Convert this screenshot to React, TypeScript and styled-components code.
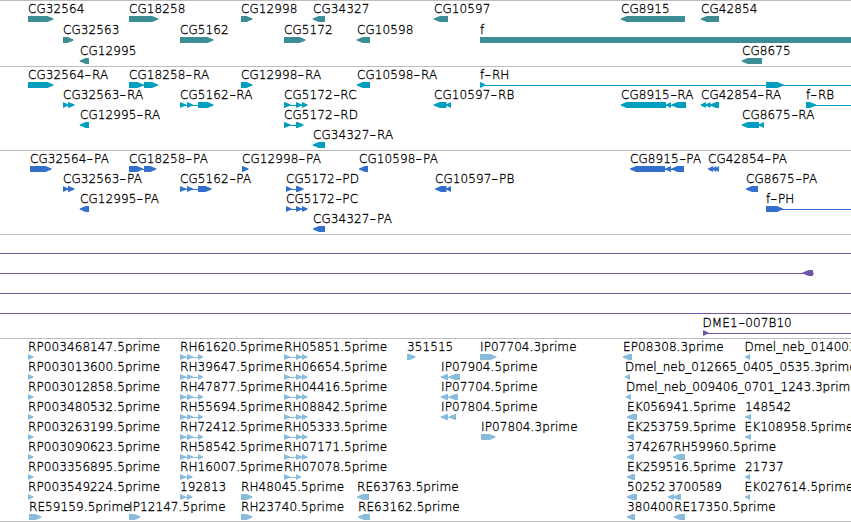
import React from "react";
import styled, { createGlobalStyle } from "styled-components";

const GlobalStyle = createGlobalStyle`
  body { margin: 0; background: #fff; overflow: hidden; }
`;

const Browser = styled.main`
  display: flex;
  flex-direction: column;
  width: 851px;
  height: 522px;
  overflow: hidden;
  background: #fff;
  color: #000;
  font: 200 12px/14px "DejaVu Sans", sans-serif;
`;

const Track = styled.section<{ $color: string; $end: number }>`
  flex: none;
  border-top: 1px solid #bdbdbd;
  padding: 1px 0 ${(p) => p.$end}px;
  color: ${(p) => p.$color};
`;

const Closing = styled.div`
  flex: none;
  height: 1px;
  background: #bdbdbd;
`;

const Lane = styled.div<{ $height: number }>`
  position: relative;
  height: ${(p) => p.$height}px;
`;

/* Features sit at their genomic coordinate within a lane. */
const Label = styled.span<{ $x: number; $tight: boolean }>`
  position: absolute;
  top: 0;
  left: ${(p) => p.$x}px;
  color: #000;
  white-space: pre;
  letter-spacing: ${(p) => (p.$tight ? 0 : 0.09)}px;
  -webkit-text-stroke: 0.3px #000;
`;

const Dash = styled.span`
  display: inline-block;
  width: 7.6px;
  text-align: center;
  letter-spacing: 0;
  transform: scaleX(1.5);
`;

const Glyphs = styled.svg`
  position: absolute;
  left: 0;
  top: 14px;
  display: block;
`;

type Span = [number, number];
type Feature = { x: number; name?: string; dir: 1 | -1; spans: Span[]; line?: Span };

const f = (name: string, x: number, ...spans: Span[]): Feature => ({ name, x, dir: 1, spans });
const r = (name: string, x: number, ...spans: Span[]): Feature => ({ name, x, dir: -1, spans });
const through = (feature: Feature, from: number, to = 860): Feature => ({ ...feature, line: [from, to] });
const bare: Feature = { x: 0, dir: 1, spans: [], line: [0, 860] };

const rp = (name: string) => f(name, 28, [28, 33.5]);
const rhA = (name: string) => f(name, 180, [180, 186], [187, 193], [198, 203]);
const rhB = (name: string) => f(name, 284, [284, 290], [296, 302], [302, 307.5]);

const tracks: { color: string; end: number; height: number; lanes: Feature[][] }[] = [
  {
    color: "#3d8e94", end: 1, height: 21,
    lanes: [
      [f("CG32564", 28, [28, 53.5]), f("CG18258", 129, [129, 158.3]), f("CG12998", 241, [241, 252.5]),
        r("CG34327", 313, [312.7, 325]), r("CG10597", 434, [433.7, 448]),
        r("CG8915", 621, [620.7, 685]), r("CG42854", 701, [700.7, 719])],
      [f("CG32563", 63, [63, 73.5]), f("CG5162", 180, [180, 213.5]), f("CG5172", 284, [284, 305.5]),
        r("CG10598", 357, [356.7, 370]), f("f", 480, [480, 870])],
      [r("CG12995", 80, [79.7, 89]), r("CG8675", 742, [741.7, 762])],
    ],
  },
  {
    color: "#009fc0", end: 2, height: 20,
    lanes: [
      [f("CG32564-RA", 28, [28, 53.5]), f("CG18258-RA", 129, [129, 143.5], [144, 158]),
        f("CG12998-RA", 241, [241, 252.5]), r("CG10598-RA", 357, [356.7, 370]),
        through(f("f-RH", 480, [480, 485.5], [766, 783.5]), 480)],
      [f("CG32563-RA", 63, [63, 68.5], [68, 74.5]), f("CG5162-RA", 180, [180, 186], [187, 193], [198, 213.5]),
        f("CG5172-RC", 284, [284, 290.5], [296, 302], [302, 307.5]), r("CG10597-RB", 434, [433.7, 446.5], [446, 451]),
        r("CG8915-RA", 621, [620.7, 666], [666, 671], [671.5, 686]),
        r("CG42854-RA", 701, [700.7, 706], [705.5, 710.5], [710, 719]),
        through(f("f-RB", 806, [806, 816]), 806)],
      [r("CG12995-RA", 80, [79.7, 89]), f("CG5172-RD", 284, [284, 290.5], [296, 303.5]),
        r("CG8675-RA", 742, [741.7, 759], [758.5, 764])],
      [r("CG34327-RA", 313, [312.7, 325])],
    ],
  },
  {
    color: "#336fcc", end: 2, height: 20,
    lanes: [
      [f("CG32564-PA", 30, [30, 51.5]), f("CG18258-PA", 129, [129, 143], [144, 156.3]), f("CG12998-PA", 242, [242, 248.5]),
        r("CG10598-PA", 359, [359, 368]), r("CG8915-PA", 630, [630, 665], [665, 671], [671.5, 684]),
        r("CG42854-PA", 708, [708, 713], [712, 716.5], [715.5, 719])],
      [f("CG32563-PA", 63, [63, 68.5], [68, 74.5]), f("CG5162-PA", 180, [180, 186], [187, 193], [198, 211.5]),
        f("CG5172-PD", 286, [286, 291.5], [296, 303.5]), r("CG10597-PB", 435, [435, 446.5], [446, 451]),
        r("CG8675-PA", 746, [746, 758])],
      [r("CG12995-PA", 80, [79.7, 89]), f("CG5172-PC", 286, [286, 291.5], [296, 302], [302, 307.5]),
        through(f("f-PH", 766, [766, 783]), 766)],
      [r("CG34327-PA", 313, [313, 325])],
    ],
  },
  {
    color: "#7155a6", end: 2, height: 20,
    lanes: [
      [bare],
      [{ x: 0, dir: -1, spans: [[802.5, 813]], line: [0, 814] }],
      [bare],
      [bare],
      [through(f("DME1-007B10", 702.5, [703, 708.5]), 703)],
    ],
  },
  {
    color: "#88bcdd", end: 1, height: 20,
    lanes: [
      [rp("RP003468147.5prime"), rhA("RH61620.5prime"), rhB("RH05851.5prime"), f("351515", 407, [407, 415.5]),
        f("IP07704.3prime", 480, [480, 496.5]), r("EP08308.3prime", 623, [622.7, 632]),
        r("Dmel_neb_014003", 744.5, [745, 750])],
      [rp("RP003013600.5prime"), rhA("RH39647.5prime"), rhB("RH06654.5prime"),
        r("IP07904.5prime", 441, [440.7, 448], [449, 460]), r("Dmel_neb_012665_0405_0535.3prime", 625, [624.7, 630])],
      [rp("RP003012858.5prime"), rhA("RH47877.5prime"), rhB("RH04416.5prime"),
        r("IP07704.5prime", 441, [440.7, 448], [449, 458]), r("Dmel_neb_009406_0701_1243.3prime", 626, [625.7, 631])],
      [rp("RP003480532.5prime"), rhA("RH55694.5prime"), rhB("RH08842.5prime"),
        r("IP07804.5prime", 441, [440.7, 448], [449, 456]), r("EK056941.5prime", 627, [626.7, 637]),
        r("148542", 745, [745, 751])],
      [rp("RP003263199.5prime"), rhA("RH72412.5prime"), rhB("RH05333.5prime"), f("IP07804.3prime", 481, [481, 495.5]),
        r("EK253759.5prime", 627, [626.7, 634]), r("EK108958.5prime", 744.5, [745, 751])],
      [rp("RP003090623.5prime"), rhA("RH58542.5prime"), rhB("RH07171.5prime"), r("374267", 627, [626.7, 634]),
        r("RH59960.5prime", 673, [673, 685])],
      [rp("RP003356895.5prime"), f("RH16007.5prime", 180, [180, 186], [187, 192.5]),
        f("RH07078.5prime", 284, [284, 290], [296, 301]), r("EK259516.5prime", 627, [626.7, 635]),
        r("21737", 745, [745, 750])],
      [rp("RP003549224.5prime"), f("192813", 180, [180, 186], [187, 192.5]), f("RH48045.5prime", 241, [241, 252.5]),
        r("RE63763.5prime", 357, [357, 369]), r("50252", 627, [626.7, 637]), r("3700589", 668, [667.7, 674], [673, 681]),
        r("EK027614.5prime", 744.5, [745, 750])],
      [f("RE59159.5prime", 29, [29, 41.5]), f("IP12147.5prime", 129, [129, 140.5]), f("RH23740.5prime", 241, [241, 252.5]),
        r("RE63162.5prime", 358, [358, 370]), r("380400", 627, [626.7, 635]), r("RE17350.5prime", 674, [673.7, 685])],
    ],
  },
];

/* A block whose leading end tapers to a point; short blocks become triangles. */
function arrow([a, b]: Span, dir: 1 | -1) {
  const head = Math.min(6, b - a);
  const tip = dir === 1 ? b : a;
  const tail = dir === 1 ? a : b;
  const neck = tip - dir * head;
  return `${tail},0 ${neck},0 ${tip},2.5 ${tip},3.5 ${neck},6 ${tail},6`;
}

function Name({ text }: { text: string }) {
  const parts = text.split("-");
  return <>{parts.map((part, i) => <React.Fragment key={i}>{i > 0 && <Dash>-</Dash>}{part}</React.Fragment>)}</>;
}

export default function App() {
  return (
    <>
      <GlobalStyle />
      <Browser>
        {tracks.map((track) => (
          <Track key={track.color} $color={track.color} $end={track.end}>
            {track.lanes.map((lane, i) => (
              <Lane key={i} $height={track.height}>
                <Glyphs width="851" height="6" fill="currentColor">
                  {lane.map((item, j) => {
                    const line = item.line ?? (item.spans.length > 1 ? [item.spans[0][0] + 1, item.spans[item.spans.length - 1][1] - 1] : null);
                    return (
                      <g key={j}>
                        {line && <rect x={line[0]} y="3" width={line[1] - line[0]} height="1" />}
                        {item.spans.map((span, k) => <polygon key={k} points={arrow(span, item.dir)} />)}
                      </g>
                    );
                  })}
                </Glyphs>
                {lane.map((item) => item.name && (
                  <Label key={item.name} $x={item.x} $tight={item.name.includes("_")}><Name text={item.name} /></Label>
                ))}
              </Lane>
            ))}
          </Track>
        ))}
        <Closing />
      </Browser>
    </>
  );
}
